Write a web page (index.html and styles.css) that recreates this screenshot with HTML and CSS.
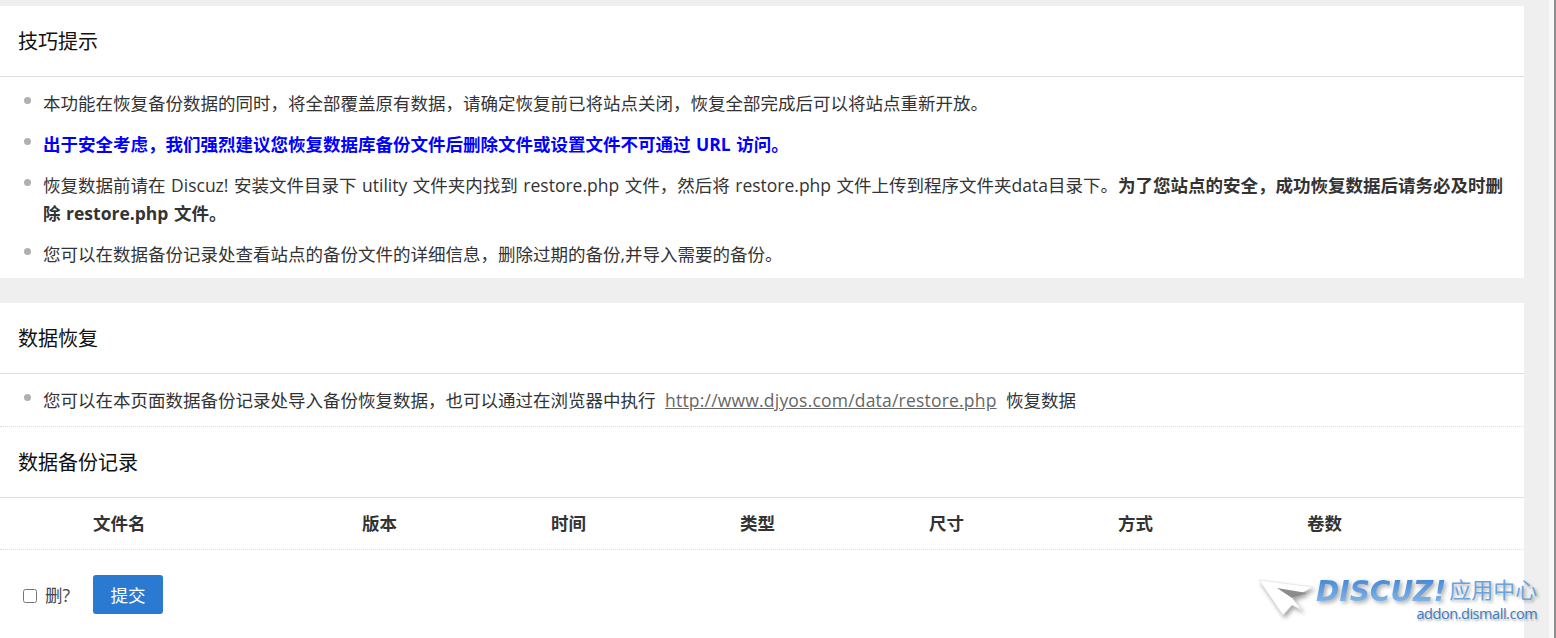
FILE: index.html
```html
<!DOCTYPE html>
<html lang="zh-CN">
<head>
<meta charset="utf-8">
<title>数据恢复</title>
<link rel="stylesheet" href="styles.css">
</head>
<body>
<div class="page">
  <main class="content">
    <section class="panel">
      <h2 class="panel-title">技巧提示</h2>
      <ul class="tips">
        <li>本功能在恢复备份数据的同时，将全部覆盖原有数据，请确定恢复前已将站点关闭，恢复全部完成后可以将站点重新开放。</li>
        <li><strong class="blue">出于安全考虑，我们强烈建议您恢复数据库备份文件后删除文件或设置文件不可通过 URL 访问。</strong></li>
        <li class="spaced">恢复数据前请在 Discuz! 安装文件目录下 utility 文件夹内找到 restore.php 文件，然后将 restore.php 文件上传到程序文件夹data目录下。<strong>为了您站点的安全，成功恢复数据后请务必及时删除 restore.php 文件。</strong></li>
        <li>您可以在数据备份记录处查看站点的备份文件的详细信息，删除过期的备份,并导入需要的备份。</li>
      </ul>
    </section>
    <section class="panel second">
      <h2 class="panel-title">数据恢复</h2>
      <ul class="tips single">
        <li>您可以在本页面数据备份记录处导入备份恢复数据，也可以通过在浏览器中执行 <a class="link" href="#">http://www.djyos.com/data/restore.php</a> 恢复数据</li>
      </ul>
      <h2 class="panel-title">数据备份记录</h2>
      <div class="table-head">
        <span></span><span>文件名</span><span>版本</span><span>时间</span><span>类型</span><span>尺寸</span><span>方式</span><span>卷数</span>
      </div>
      <form class="table-foot">
        <label class="del"><input type="checkbox" class="check"><span>删?</span></label>
        <button type="button" class="submit">提交</button>
      </form>
    </section>
  </main>
  <div class="rail"></div>
  <div class="scrollbar"></div>
</div>
<div class="watermark">
  <svg class="wm-arrow" viewBox="0 0 58 44" width="58" height="44" aria-hidden="true">
    <path d="M1 3 L55 10 L34 21 L44 33 L34 28 L25 38 Z" fill="#fff" stroke="#e4e4e4" stroke-width=".8"/>
    <path d="M19 11 L49 16 L34 21 Z" fill="#8c8c8c"/>
  </svg>
  <div class="wm-text">
    <div class="wm-top"><span class="wm-logo">DISCUZ!</span><span class="wm-cn">应用中心</span></div>
    <div class="wm-url">addon.dismall.com</div>
  </div>
</div>
</body>
</html>
```
FILE: styles.css
```css
* { box-sizing: border-box; }
html, body { margin: 0; height: 100%; overflow: hidden; }
body {
  font-family: "Open Sans", "Noto Sans CJK SC", sans-serif;
  font-size: 17.5px;
  color: #333;
  background: #efefef;
}
.page { display: flex; height: 638px; }
.content { width: 1524px; flex: none; padding-top: 6px; }
.rail { width: 25px; flex: none; background: #efefef; }
.scrollbar { flex: 1; background: #f8f8f8; border-right: 2px solid #8f8f8f; }
.panel { background: #fff; }
.second { margin-top: 25px; height: 335px; }
.panel-title {
  margin: 0;
  height: 71px;
  padding: 2px 18px 0;
  font-size: 20px;
  font-weight: 400;
  line-height: 68px;
  color: #111;
  border-bottom: 1px solid #ddd;
}
.tips { margin: 0; padding: 12px 18px 0 43px; height: 201px; list-style: none; }
.tips li { position: relative; line-height: 28px; margin-bottom: 13px; }
.tips li::before {
  content: "";
  position: absolute;
  left: -19px;
  top: 8px;
  width: 7px;
  height: 7px;
  border-radius: 50%;
  background: #b0b0b0;
}
.tips .spaced { word-spacing: 1px; }
.tips.single { height: 53px; border-bottom: 1px dotted #c5e3fa; }
.blue { color: #00f; word-spacing: 1px; }
.link { color: #666; text-decoration: underline; margin: 0 5px; letter-spacing: .2px; }
.table-head {
  display: grid;
  grid-template-columns: 93px 269px repeat(5, 189px) 1fr;
  height: 52px;
  line-height: 50px;
  font-weight: 700;
  border-bottom: 1px dotted #c5e3fa;
}
.table-foot {
  display: grid;
  grid-template-columns: 93px auto;
  justify-content: start;
  align-items: center;
  padding-top: 25px;
}
.del { display: flex; align-items: center; padding-left: 23px; color: #444; }
.check { width: 14px; height: 14px; margin: 2px 8px 0 0; }
.submit {
  width: 70px;
  height: 39px;
  padding: 0;
  border: 0;
  border-radius: 3px;
  background: #2b7ad1;
  color: #fff;
  font: inherit;
}
.watermark {
  position: absolute;
  left: 1258px;
  top: 577px;
  display: flex;
  width: 279px;
  height: 48px;
}
.wm-arrow { flex: none; filter: drop-shadow(2px 3px 2px rgba(0,0,0,.35)); }
.wm-text { display: flex; flex: 1; flex-direction: column; align-items: flex-end; }
.wm-top { display: flex; align-items: flex-start; height: 29px; white-space: nowrap; }
.wm-logo {
  font: italic 700 28px/29px "DejaVu Sans", sans-serif;
  background: linear-gradient(#3f86d6, #8dbbe8);
  -webkit-background-clip: text;
  background-clip: text;
  color: transparent;
  filter: drop-shadow(2px 2px 2px rgba(0,0,0,.35));
}
.wm-cn { font-size: 22px; line-height: 24px; color: #6aa4de; margin-left: 3px; text-shadow: 2px 2px 3px rgba(0,0,0,.3); }
.wm-url { font-size: 14.5px; line-height: 16px; color: #3c7cc0; letter-spacing: -.45px; text-shadow: 1px 2px 2px rgba(0,0,0,.3); }
```
